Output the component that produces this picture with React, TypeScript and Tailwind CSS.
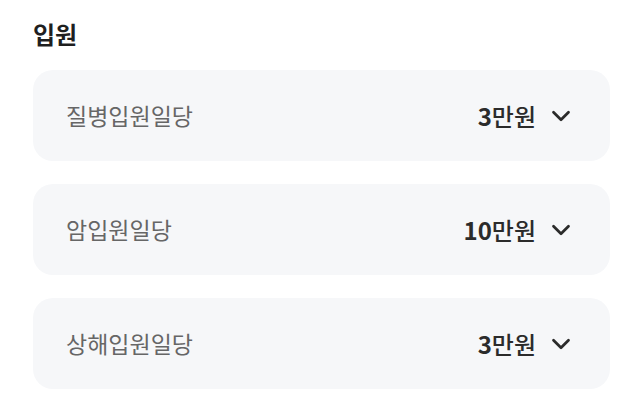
import { ChevronDown } from "lucide-react";

const items = [
  { label: "질병입원일당", amount: "3", unit: "만원" },
  { label: "암입원일당", amount: "10", unit: "만원" },
  { label: "상해입원일당", amount: "3", unit: "만원" },
];

export default function App() {
  return (
    <div
      className="min-h-[408px] w-[644px] bg-white pl-[33px] pr-[34px] pt-[18px]"
      style={{ fontFamily: '"Noto Sans CJK KR", "Noto Sans", sans-serif' }}
    >
      <h2 className="text-[24px] font-bold leading-[32px] text-[#1f1f1f]">입원</h2>
      <div className="mt-[20px] flex flex-col gap-[23px]">
        {items.map((item) => (
          <div
            key={item.label}
            className="flex h-[91px] items-center justify-between rounded-[20px] bg-[#f6f7f9] pl-[33px] pr-[34px]"
          >
            <span className="text-[23px] leading-none text-[#666666]">{item.label}</span>
            <div className="flex items-center gap-[10px]">
              <span className="text-[24px] leading-none text-[#2b2b2b]">
                <span className="font-bold">{item.amount}</span>
                <span className="font-medium">{item.unit}</span>
              </span>
              <ChevronDown className="h-[30px] w-[30px] text-[#2b2b2b]" strokeWidth={2.2} />
            </div>
          </div>
        ))}
      </div>
    </div>
  );
}
